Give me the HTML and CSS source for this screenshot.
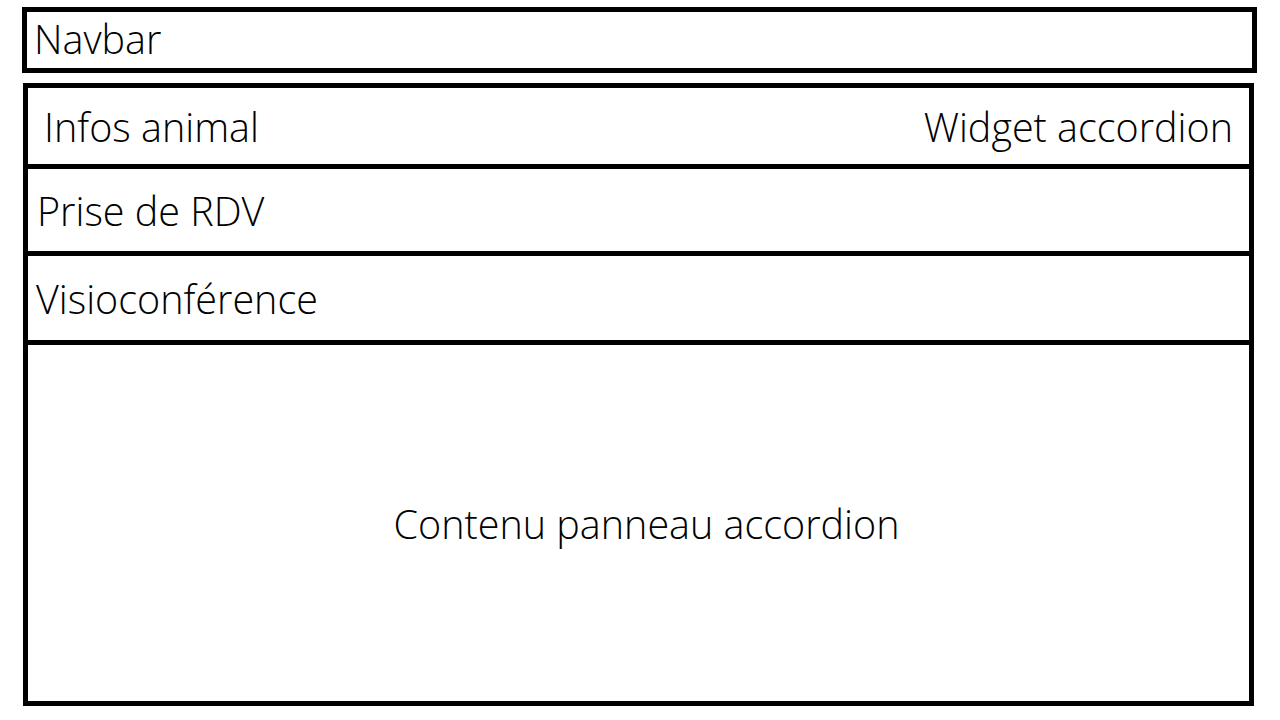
FILE: index.html
```html
<!DOCTYPE html>
<html lang="fr">
<head>
<meta charset="utf-8">
<title>Wireframe</title>
<link rel="stylesheet" href="styles.css">
</head>
<body>
<div class="page">
  <header class="navbar">Navbar</header>
  <main class="accordion">
    <div class="row row-1"><span class="label-infos">Infos animal</span><span class="label-widget">Widget accordion</span></div>
    <div class="row row-2"><span class="label-rdv">Prise de RDV</span></div>
    <div class="row row-3"><span class="label-visio">Visioconférence</span></div>
    <div class="panel">Contenu panneau accordion</div>
  </main>
</div>
</body>
</html>
```
FILE: styles.css
```css
* { box-sizing: border-box; }
html, body { margin: 0; padding: 0; background: #fff; }
body {
  font-family: "Open Sans", "Noto Sans", sans-serif;
  font-size: 39.5px;
  font-weight: 300;
  color: #000;
  width: 1280px;
  height: 720px;
  overflow: hidden;
}
.page {
  display: flex;
  flex-direction: column;
  padding-top: 7px;
}
.navbar {
  margin-left: 22px;
  width: 1235px;
  height: 66px;
  border: 5px solid #000;
  display: flex;
  align-items: center;
  padding-left: 7px;
  padding-bottom: 2px;
}
.accordion {
  margin-top: 10px;
  margin-left: 23px;
  width: 1231px;
  height: 623px;
  border: 5px solid #000;
  display: flex;
  flex-direction: column;
}
.row {
  display: flex;
  align-items: center;
  justify-content: space-between;
  border-bottom: 5px solid #000;
}
.row-1 { height: 81px; padding: 2px 16px 0 16px; }
.row-2 { height: 87px; padding: 2px 0 0 9px; }
.row-3 { height: 89px; padding: 1px 0 0 8px; }
.panel {
  flex: 1;
  display: flex;
  align-items: center;
  justify-content: center;
  padding-left: 16px;
  padding-top: 2px;
}
```
